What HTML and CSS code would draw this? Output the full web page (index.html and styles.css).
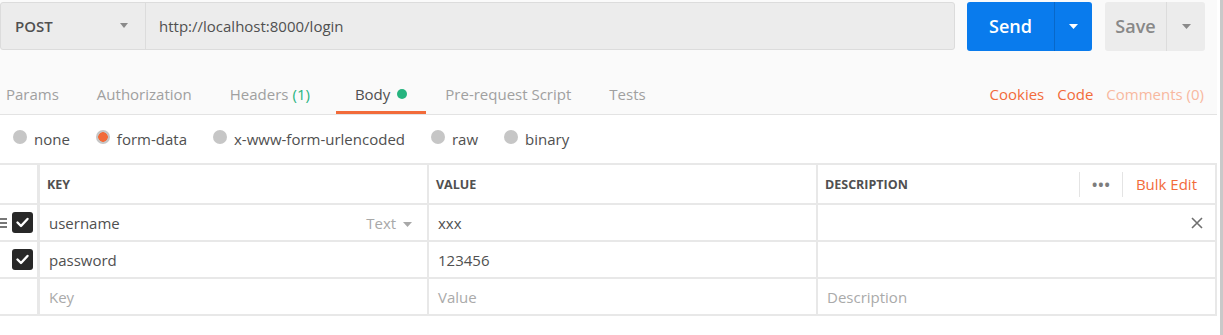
FILE: index.html
```html
<!DOCTYPE html>
<html lang="en">
<head>
  <meta charset="UTF-8">
  <meta name="viewport" content="width=device-width, initial-scale=1.0">
  <title>Request builder</title>
  <link rel="stylesheet" href="styles.css">
</head>
<body>
  <div class="pane">
    <div class="request-bar">
      <div class="url-group">
        <div class="method">
          <span>POST</span>
          <svg class="caret" width="8" height="5" viewBox="0 0 8 5"><path d="M0 0h8L4 5z" fill="#8a8a8a"/></svg>
        </div>
        <div class="url">http://localhost:8000/login</div>
      </div>
      <div class="split-btn send">
        <span class="btn-label">Send</span>
        <span class="btn-caret"><svg width="9" height="5" viewBox="0 0 9 5"><path d="M0 0h9L4.5 5z" fill="#fff"/></svg></span>
      </div>
      <div class="split-btn save">
        <span class="btn-label">Save</span>
        <span class="btn-caret"><svg width="9" height="5" viewBox="0 0 9 5"><path d="M0 0h9L4.5 5z" fill="#8a8a8a"/></svg></span>
      </div>
    </div>

    <div class="tabs">
      <div class="tab">Params</div>
      <div class="tab">Authorization</div>
      <div class="tab">Headers<span class="count">(1)</span></div>
      <div class="tab active">Body<span class="dot"></span></div>
      <div class="tab">Pre-request Script</div>
      <div class="tab">Tests</div>
      <div class="tab-links">
        <span class="link">Cookies</span>
        <span class="link">Code</span>
        <span class="link muted">Comments (0)</span>
      </div>
    </div>

    <div class="body-types">
      <label class="radio"><span class="dot-radio"></span>none</label>
      <label class="radio"><span class="dot-radio checked"></span>form-data</label>
      <label class="radio"><span class="dot-radio"></span>x-www-form-urlencoded</label>
      <label class="radio"><span class="dot-radio"></span>raw</label>
      <label class="radio"><span class="dot-radio"></span>binary</label>
    </div>

    <div class="kv-table">
      <div class="kv-row head">
        <div class="cell check"></div>
        <div class="cell">KEY</div>
        <div class="cell">VALUE</div>
        <div class="cell desc-head">
          <span>DESCRIPTION</span>
          <div class="head-actions">
            <span class="more">&bull;&bull;&bull;</span>
            <span class="bulk">Bulk Edit</span>
          </div>
        </div>
      </div>
      <div class="kv-row">
        <div class="cell check">
          <span class="handle"></span>
          <svg class="checkbox" width="21" height="21" viewBox="0 0 21 21"><rect width="21" height="21" rx="3" fill="#282828"/><path d="M5.5 10.5l3.5 3.5 6.5-7" fill="none" stroke="#fff" stroke-width="2.4" stroke-linecap="round" stroke-linejoin="round"/></svg>
        </div>
        <div class="cell key-cell">
          <span>username</span>
          <span class="type">Text <svg width="9" height="5" viewBox="0 0 9 5"><path d="M0 0h9L4.5 5z" fill="#a8a8a8"/></svg></span>
        </div>
        <div class="cell">xxx</div>
        <div class="cell remove-cell">
          <svg width="12" height="12" viewBox="0 0 12 12"><path d="M1 1l10 10M11 1L1 11" stroke="#6f6f6f" stroke-width="1.6"/></svg>
        </div>
      </div>
      <div class="kv-row">
        <div class="cell check">
          <svg class="checkbox" width="21" height="21" viewBox="0 0 21 21"><rect width="21" height="21" rx="3" fill="#282828"/><path d="M5.5 10.5l3.5 3.5 6.5-7" fill="none" stroke="#fff" stroke-width="2.4" stroke-linecap="round" stroke-linejoin="round"/></svg>
        </div>
        <div class="cell">password</div>
        <div class="cell">123456</div>
        <div class="cell"></div>
      </div>
      <div class="kv-row">
        <div class="cell check"></div>
        <div class="cell placeholder">Key</div>
        <div class="cell placeholder">Value</div>
        <div class="cell placeholder">Description</div>
      </div>
    </div>
  </div>
  <div class="edge"></div>
</body>
</html>
```

FILE: styles.css
```css
body {
  font-family: "Open Sans", "Noto Sans", sans-serif;
  font-size: 15px;
  color: #505050;
  background-color: #fff;
  margin: 0;
  padding: 0;
  display: flex;
  height: 335px;
  overflow: hidden;
}
.pane {
  width: 1217px;
}
.edge {
  width: 3px;
  margin-left: 3px;
  background-color: #c9c9c9;
}
.request-bar {
  display: flex;
  align-items: center;
  height: 50px;
  padding-top: 1px;
  box-sizing: border-box;
  background-color: #fafafa;
}
.url-group {
  display: flex;
  width: 955px;
  height: 48px;
  background-color: #ececec;
  border: 1px solid #dcdcdc;
  border-radius: 3px;
  box-sizing: border-box;
}
.method {
  display: flex;
  align-items: center;
  justify-content: space-between;
  width: 145px;
  padding: 0 17px 0 14px;
  box-sizing: border-box;
  border-right: 1px solid #dcdcdc;
  font-weight: 600;
  color: #505050;
}
.url {
  display: flex;
  align-items: center;
  padding-left: 13px;
}
.split-btn {
  display: flex;
  height: 49px;
  margin-left: 12px;
  border-radius: 3px;
  font-size: 18px;
  font-weight: 600;
  margin-top: 1px;
}
.split-btn .btn-label {
  display: flex;
  align-items: center;
  justify-content: center;
}
.split-btn .btn-caret {
  display: flex;
  align-items: center;
  justify-content: center;
}
.send {
  width: 125px;
  background-color: #097bed;
  color: #fff;
}
.send .btn-label {
  width: 87px;
}
.send .btn-caret {
  flex: 1;
  border-left: 1px solid #0868c9;
}
.save {
  width: 100px;
  margin-left: 13px;
  background-color: #ececec;
  color: #888;
}
.save .btn-label {
  width: 61px;
}
.save .btn-caret {
  flex: 1;
  border-left: 1px solid #dcdcdc;
}
.tabs {
  display: flex;
  align-items: flex-end;
  height: 65px;
  box-sizing: border-box;
  background-color: #fafafa;
  border-bottom: 1px solid #e3e3e3;
}
.tab {
  padding: 0 19px 7px;
  line-height: 20px;
  color: #a0a0a0;
  border-bottom: 3px solid transparent;
}
.tab:first-child {
  padding-left: 6px;
}
.tab .count {
  color: #26b47f;
  margin: 0 7px 0 4px;
}
.tab.active {
  color: #505050;
  border-bottom-color: #f26b3a;
}
.tab .dot {
  display: inline-block;
  width: 10px;
  height: 10px;
  margin-left: 7px;
  border-radius: 50%;
  background-color: #26b47f;
  vertical-align: 1px;
}
.tab-links {
  display: flex;
  margin-left: auto;
  padding: 0 13px 10px 0;
  line-height: 20px;
}
.link {
  color: #f26b3a;
  margin-left: 13px;
}
.link.muted {
  color: #f8b89f;
}
.body-types {
  display: flex;
  align-items: center;
  height: 48px;
  padding-left: 13px;
}
.radio {
  display: flex;
  align-items: center;
  margin-right: 26px;
  line-height: 20px;
}
.dot-radio {
  width: 14px;
  height: 14px;
  margin-right: 7px;
  border-radius: 50%;
  background-color: #c6c6c6;
  position: relative;
  top: -2px;
}
.dot-radio.checked {
  background-image: radial-gradient(circle, #f26b3a 0 4.5px, transparent 5px);
}
.kv-table {
  border-top: 2px solid #e8e8e8;
  border-right: 2px solid #e8e8e8;
  background-color: #fff;
}
.kv-row {
  display: grid;
  grid-template-columns: 37px 390px 389px 399px;
  height: 35px;
  border-bottom: 2px solid #e8e8e8;
}
.kv-row.head {
  height: 38px;
  font-size: 12.5px;
  font-weight: 700;
}
.cell {
  display: flex;
  align-items: center;
  padding-left: 9px;
  border-left: 2px solid #e8e8e8;
}
.head .cell {
  padding-left: 7px;
}
.cell.check {
  border-left: none;
  padding-left: 0;
  position: relative;
}
.cell.check + .cell {
  border-left-width: 3px;
}
.checkbox {
  margin-left: 12px;
}
.handle {
  position: absolute;
  left: 0;
  top: 50%;
  width: 7px;
  height: 2px;
  margin-top: -5px;
  background-color: #777;
  box-shadow: 0 4px 0 #777, 0 8px 0 #777;
}
.key-cell {
  justify-content: space-between;
  padding-right: 15px;
}
.type {
  color: #a8a8a8;
}
.type svg {
  margin-left: 3px;
  vertical-align: 2px;
}
.desc-head {
  justify-content: space-between;
}
.head-actions {
  display: flex;
  align-items: center;
  height: 25px;
}
.more {
  display: flex;
  align-items: center;
  height: 25px;
  padding: 0 11px 0 12px;
  border-left: 1px solid #e4e4e4;
  border-right: 1px solid #e4e4e4;
  color: #7d7d7d;
  font-size: 14px;
  letter-spacing: 1px;
}
.bulk {
  color: #f26b3a;
  font-size: 15px;
  font-weight: 400;
  padding: 0 18px 0 13px;
}
.remove-cell {
  justify-content: flex-end;
  padding-right: 12px;
}
.placeholder {
  color: #aaa;
}
```
